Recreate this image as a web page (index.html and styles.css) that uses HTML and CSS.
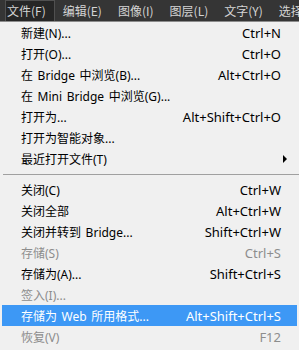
FILE: index.html
```html
<!DOCTYPE html>
<html lang="zh-CN">
<head>
<meta charset="utf-8">
<link rel="stylesheet" href="styles.css">
</head>
<body>
<div class="menubar">
  <span class="top-item active">文件(F)</span>
  <span class="top-item">编辑(E)</span>
  <span class="top-item">图像(I)</span>
  <span class="top-item">图层(L)</span>
  <span class="top-item">文字(Y)</span>
  <span class="top-item">选择(S)</span>
</div>
<div class="menu">
  <div class="row"><span class="label">新建(N)...</span><span class="key">Ctrl+N</span></div>
  <div class="row"><span class="label">打开(O)...</span><span class="key">Ctrl+O</span></div>
  <div class="row"><span class="label">在 Bridge 中浏览(B)...</span><span class="key">Alt+Ctrl+O</span></div>
  <div class="row"><span class="label">在 Mini Bridge 中浏览(G)...</span><span class="key"></span></div>
  <div class="row"><span class="label">打开为...</span><span class="key">Alt+Shift+Ctrl+O</span></div>
  <div class="row"><span class="label">打开为智能对象...</span><span class="key"></span></div>
  <div class="row"><span class="label">最近打开文件(T)</span><span class="key"></span><span class="arrow"></span></div>
  <div class="sep"></div>
  <div class="row"><span class="label">关闭(C)</span><span class="key">Ctrl+W</span></div>
  <div class="row"><span class="label">关闭全部</span><span class="key">Alt+Ctrl+W</span></div>
  <div class="row"><span class="label">关闭并转到 Bridge...</span><span class="key">Shift+Ctrl+W</span></div>
  <div class="row disabled"><span class="label">存储(S)</span><span class="key">Ctrl+S</span></div>
  <div class="row"><span class="label">存储为(A)...</span><span class="key">Shift+Ctrl+S</span></div>
  <div class="row disabled"><span class="label">签入(I)...</span><span class="key"></span></div>
  <div class="row selected"><span class="label">存储为 Web 所用格式...</span><span class="key">Alt+Shift+Ctrl+S</span></div>
  <div class="row disabled"><span class="label">恢复(V)</span><span class="key">F12</span></div>
</div>
</body>
</html>
```

FILE: styles.css
```css
html, body {
  margin: 0;
  padding: 0;
  background: #f0f0f0;
  overflow: hidden;
}
body {
  width: 299px;
  height: 350px;
  font-family: "Noto Sans", "Noto Sans CJK SC", sans-serif;
  font-size: 12px;
}
.menubar {
  height: 21px;
  background: #353535;
  border-bottom: 1px solid #8c8c8c;
  display: flex;
  align-items: stretch;
  padding-left: 5px;
  white-space: nowrap;
  overflow: hidden;
  font-family: "Noto Sans CJK SC", sans-serif;
}
.top-item {
  color: #d4d4d4;
  display: flex;
  align-items: center;
  padding: 0 8px 0 8px;
  line-height: 1;
}
.top-item.active {
  background: #262626;
  border: 1px solid #505050;
  border-bottom: none;
  padding: 0 8px 0 1px;
}
.menu {
  padding: 0 2px 0 2px;
}
.row {
  height: 21px;
  display: flex;
  align-items: center;
  color: #000;
  position: relative;
}
.label {
  flex: 1;
  padding-left: 19px;
  white-space: nowrap;
  word-spacing: 1.5px;
  font-family: "Noto Sans", "Noto Sans CJK SC", sans-serif;
}
.key {
  padding-right: 16px;
  white-space: nowrap;
  font-size: 13px;
}
.row.disabled {
  color: #8d8d8d;
}
.row.selected {
  background: #3d98f5;
  color: #fff;
}
.arrow {
  position: absolute;
  right: 10px;
  top: 7px;
  width: 0;
  height: 0;
  border-left: 4px solid #000;
  border-top: 4px solid transparent;
  border-bottom: 4px solid transparent;
}
.sep {
  height: 10px;
  display: flex;
  align-items: center;
  margin-left: 1px;
  margin-right: -2px;
}
.sep::before {
  content: "";
  flex: 1;
  height: 1px;
  background: #a0a0a0;
}
```
